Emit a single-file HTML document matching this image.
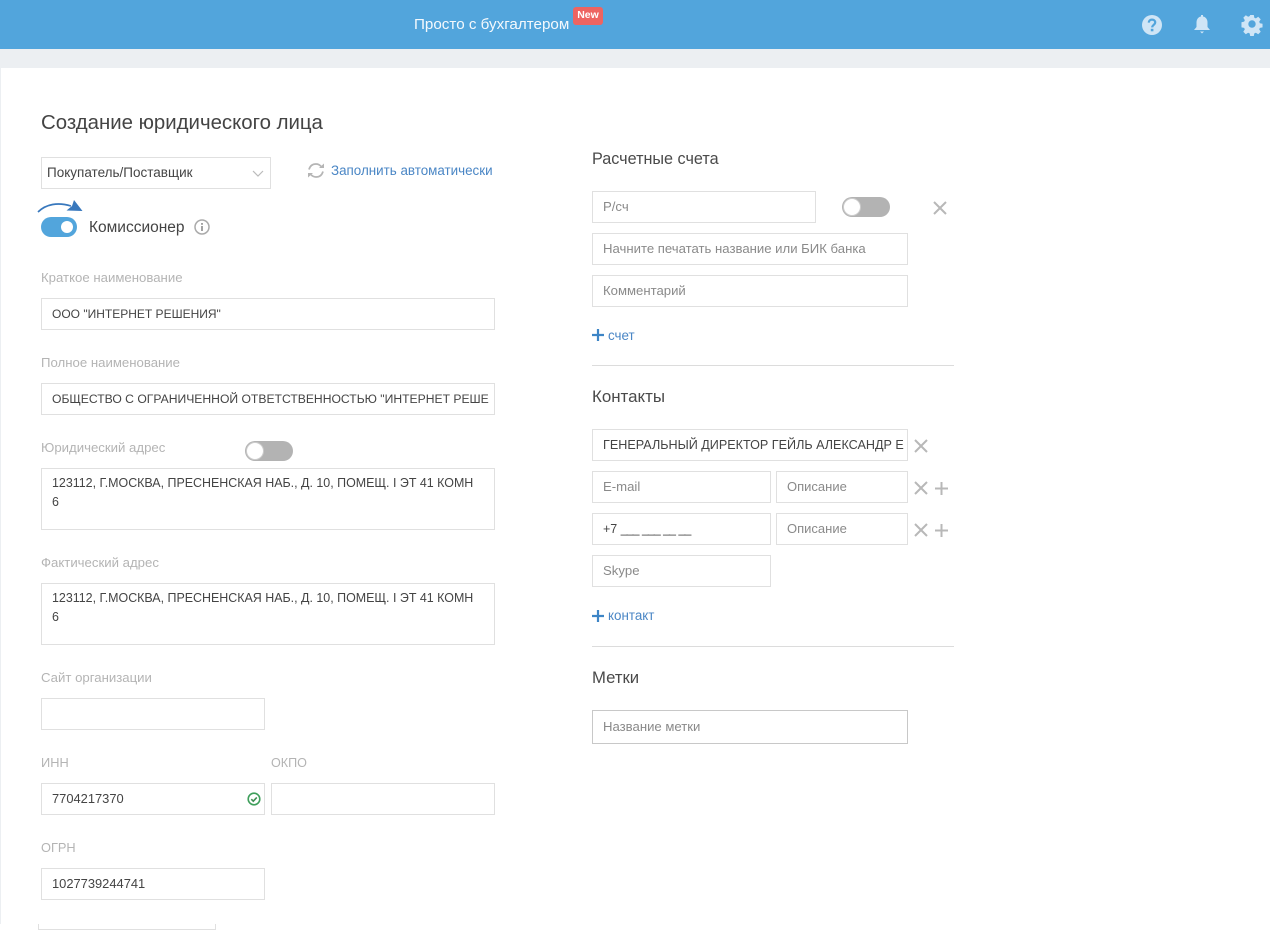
<!DOCTYPE html>
<html lang="ru"><head><meta charset="utf-8"><title>Создание юридического лица</title>
<style>
html,body{margin:0;padding:0;width:1270px;height:933px;overflow:hidden;background:#fff}
body{position:relative;font-family:"Liberation Sans",sans-serif;font-size:13px;color:#444}
.a{position:absolute}
.t{position:absolute;white-space:nowrap;line-height:18px}
.l{color:#b4b4b4;font-size:13.2px}
.h{font-size:16.4px;color:#4a4a4a;line-height:20px}
.b{position:absolute;box-sizing:border-box;border:1px solid #e0e0e0;background:#fff;overflow:hidden;white-space:nowrap}
.i{line-height:30px;padding-left:10px;color:#444;font-size:12.5px}
.p{color:#8a8a8a;font-size:13.15px}
.lk{color:#4a86c5;font-size:13.4px}
.hr{position:absolute;height:1px;background:#dcdcdc;left:592px;width:362px}
.sw{position:absolute;width:48px;height:20px;border-radius:10px;background:#b3b3b3}
.sw:before{content:"";position:absolute;left:1px;top:1px;width:18px;height:18px;border-radius:50%;background:#fff;box-sizing:border-box;border:1px solid #ccc}
.u{letter-spacing:-1.05px}
svg{position:absolute;overflow:visible}
</style></head><body>
<div class="a" style="left:0;top:0;width:1270px;height:49px;background:#52a5dc"></div>
<div class="a" style="left:0;top:49px;width:1270px;height:19px;background:#eceff2"></div>
<div class="a" style="left:0;top:68px;width:1px;height:856px;background:#eceff2"></div>
<div class="t" style="left:414px;top:16px;color:#f4f9fd;font-size:15.2px">Просто с бухгалтером</div>
<div class="t" style="left:573px;top:7px;width:30px;height:18px;border-radius:3px;background:#ee6461;color:#fff;font-size:10.5px;font-weight:bold;text-align:center;line-height:17px">New</div>

<svg style="left:1141px;top:14px" width="22" height="22" viewBox="0 0 22 22"><circle cx="11" cy="11" r="10" fill="#cfe5f6"/><path d="M7.8 8.6C7.8 6.7 9.2 5.6 11 5.6s3.2 1.1 3.2 2.8c0 2.4-3 2.400-3 5" fill="none" stroke="#52a5dc" stroke-width="2.200"/><rect x="9.800" y="14.800" width="2.600" height="2.500" fill="#52a5dc"/></svg>
<svg style="left:1193px;top:14px" width="18" height="20" viewBox="0 0 18 20"><path d="M8 1h2v1.500c3 .6 4.500 3 4.500 6v4.500l2.500 3H1l2.500-3V8.500c0-3 1.500-5.400 4.500-6z" fill="#cfe5f6"/><path d="M7 17.500h4L9 19.500z" fill="#cfe5f6"/></svg>
<svg style="left:1241px;top:13px" width="22" height="22" viewBox="0 0 22 22"><path d="M9 1h4l.6 3 1.700.7 2.600-1.700 2.800 2.800-1.700 2.600.7 1.700 3 .6v4l-3 .6-.7 1.700 1.700 2.600-2.800 2.800-2.600-1.700-1.700.7-.6 3H9l-.6-3-1.700-.7-2.600 1.700-2.800-2.800 1.700-2.600-.7-1.700-3-.6V9l3-.6.7-1.700L1.300 4.100 4.100 1.300l2.600 1.700 1.700-.7z" transform="translate(1.100 1.100) scale(.9)" fill="#cfe5f6"/><circle cx="11" cy="11" r="3.700" fill="#52a5dc"/></svg>

<div class="t" style="left:41px;top:111px;font-size:20.4px;line-height:24px;color:#444">Создание юридического лица</div>

<div class="b i" style="left:41px;top:157px;width:230px;height:32px;padding-left:5px;color:#444;font-size:13.5px">Покупатель/Поставщик</div>
<svg style="left:252px;top:170px" width="12" height="8" viewBox="0 0 12 8"><path d="M1 1l5 5 5-5" fill="none" stroke="#bbb" stroke-width="1.200"/></svg>
<svg style="left:307px;top:162px" width="18" height="17" viewBox="0 0 18 17"><path d="M2 7.500C3 4 5.500 2 9 2c2.200 0 3.800 1 5 2.300M16 9.500C15 13 12.500 15 9 15c-2.200 0-3.800-1-5-2.300" fill="none" stroke="#b5b5b5" stroke-width="1.700"/><path d="M12 6h5V1.500zM6 11H1v4.500z" fill="#b5b5b5"/></svg>
<div class="t lk" style="left:331px;top:162px">Заполнить автоматически</div>

<svg style="left:37px;top:198px" width="46" height="16" viewBox="0 0 46 16"><path d="M1 14C9 6 21 4 34 8" fill="none" stroke="#3878bd" stroke-width="1.700"/><path d="M37 2l8.500 11L29.500 12.500l5.500-4.500z" fill="#3878bd"/></svg>
<div class="a" style="left:41px;top:217px;width:36px;height:20px;border-radius:10px;background:#52a5dc"></div>
<div class="a" style="left:61px;top:221px;width:12px;height:12px;border-radius:50%;background:#fff"></div>
<div class="t" style="left:89px;top:219px;font-size:15.5px;color:#444">Комиссионер</div>
<svg style="left:194px;top:219px" width="16" height="16" viewBox="0 0 16 16"><circle cx="8" cy="8" r="7" fill="none" stroke="#aaa" stroke-width="1.500"/><rect x="7.100" y="7" width="1.800" height="5" fill="#999"/><rect x="7.100" y="4" width="1.800" height="1.800" fill="#999"/></svg>

<div class="t l" style="left:41px;top:269px">Краткое наименование</div>
<div class="b i" style="left:41px;top:298px;width:454px;height:32px;font-size:12px">ООО "ИНТЕРНЕТ РЕШЕНИЯ"</div>
<div class="t l" style="left:41px;top:354px">Полное наименование</div>
<div class="b i" style="left:41px;top:383px;width:454px;height:32px;font-size:12.15px">ОБЩЕСТВО С ОГРАНИЧЕННОЙ ОТВЕТСТВЕННОСТЬЮ "ИНТЕРНЕТ РЕШЕ</div>
<div class="t l" style="left:41px;top:439px">Юридический адрес</div>
<div class="sw" style="left:245px;top:441px"></div>
<div class="b" style="left:41px;top:468px;width:454px;height:62px;padding:5px 10px;line-height:19px;white-space:normal;font-size:12.45px">123112, Г.МОСКВА, ПРЕСНЕНСКАЯ НАБ., Д. 10, ПОМЕЩ. I ЭТ 41 КОМН<br>6</div>
<div class="t l" style="left:41px;top:554px">Фактический адрес</div>
<div class="b" style="left:41px;top:583px;width:454px;height:62px;padding:5px 10px;line-height:19px;white-space:normal;font-size:12.45px">123112, Г.МОСКВА, ПРЕСНЕНСКАЯ НАБ., Д. 10, ПОМЕЩ. I ЭТ 41 КОМН<br>6</div>
<div class="t l" style="left:41px;top:669px">Сайт организации</div>
<div class="b" style="left:41px;top:698px;width:224px;height:32px"></div>
<div class="t l" style="left:41px;top:754px;font-size:12.8px">ИНН</div>
<div class="t l" style="left:271px;top:754px;font-size:12.6px">ОКПО</div>
<div class="b i" style="left:41px;top:783px;width:224px;height:32px;font-size:12.9px">7704217370</div>
<svg style="left:247px;top:792px" width="14" height="14" viewBox="0 0 14 14"><circle cx="7" cy="7" r="5.800" fill="none" stroke="#3f9f5c" stroke-width="1.600"/><path d="M4.300 7.200l2 2 3.500-3.800" fill="none" stroke="#3f8f54" stroke-width="1.600"/></svg>
<div class="b" style="left:271px;top:783px;width:224px;height:32px"></div>
<div class="t l" style="left:41px;top:839px;font-size:12.8px">ОГРН</div>
<div class="b i" style="left:41px;top:868px;width:224px;height:32px;font-size:12.9px">1027739244741</div>
<div class="a" style="left:38px;top:924px;width:178px;height:6px;box-sizing:border-box;border:1px solid #e0e0e0;border-top:0"></div>

<div class="t h" style="left:592px;top:149px;font-size:16.2px">Расчетные счета</div>
<div class="b i p" style="left:592px;top:191px;width:224px;height:32px">Р/сч</div>
<div class="sw" style="left:842px;top:197px"></div>
<svg style="left:933px;top:201px" width="14" height="14" viewBox="0 0 14 14"><path d="M1 1l12 12M13 1L1 13" stroke="#b8b8b8" stroke-width="2" fill="none"/></svg>
<div class="b i p" style="left:592px;top:233px;width:316px;height:32px">Начните печатать название или БИК банка</div>
<div class="b i p" style="left:592px;top:275px;width:316px;height:32px">Комментарий</div>
<svg style="left:592px;top:329px" width="12" height="12" viewBox="0 0 12 12"><path d="M6 0v12M0 6h12" stroke="#3d85c6" stroke-width="2.200"/></svg>
<div class="t lk" style="left:608px;top:327px">счет</div>
<div class="hr" style="top:365px"></div>

<div class="t h" style="left:592px;top:387px;font-size:16.9px">Контакты</div>
<div class="b i" style="left:592px;top:429px;width:316px;height:32px;padding-right:3px;font-size:12.6px">ГЕНЕРАЛЬНЫЙ ДИРЕКТОР ГЕЙЛЬ АЛЕКСАНДР Е</div>
<svg style="left:914px;top:439px" width="14" height="14" viewBox="0 0 14 14"><path d="M1 1l12 12M13 1L1 13" stroke="#b8b8b8" stroke-width="2" fill="none"/></svg>
<div class="b i p" style="left:592px;top:471px;width:179px;height:32px">E-mail</div>
<div class="b i p" style="left:776px;top:471px;width:132px;height:32px;font-size:13px">Описание</div>
<svg style="left:914px;top:481px" width="14" height="14" viewBox="0 0 14 14"><path d="M1 1l12 12M13 1L1 13" stroke="#b8b8b8" stroke-width="2" fill="none"/></svg>
<svg style="left:935px;top:482px" width="13" height="13" viewBox="0 0 13 13"><path d="M6.500 0v13M0 6.500h13" stroke="#b8b8b8" stroke-width="2"/></svg>
<div class="b i" style="left:592px;top:513px;width:179px;height:32px;color:#444">+7 <span class="u">___</span> <span class="u">___</span> <span class="u">__</span> <span class="u">__</span></div>
<div class="b i p" style="left:776px;top:513px;width:132px;height:32px;font-size:13px">Описание</div>
<svg style="left:914px;top:523px" width="14" height="14" viewBox="0 0 14 14"><path d="M1 1l12 12M13 1L1 13" stroke="#b8b8b8" stroke-width="2" fill="none"/></svg>
<svg style="left:935px;top:524px" width="13" height="13" viewBox="0 0 13 13"><path d="M6.500 0v13M0 6.500h13" stroke="#b8b8b8" stroke-width="2"/></svg>
<div class="b i p" style="left:592px;top:555px;width:179px;height:32px">Skype</div>
<svg style="left:592px;top:610px" width="12" height="12" viewBox="0 0 12 12"><path d="M6 0v12M0 6h12" stroke="#3d85c6" stroke-width="2.200"/></svg>
<div class="t lk" style="left:608px;top:607px">контакт</div>
<div class="hr" style="top:646px"></div>

<div class="t h" style="left:592px;top:668px;font-size:16.7px">Метки</div>
<div class="b i p" style="left:592px;top:710px;width:316px;height:34px;line-height:32px;border-color:#c8c8c8">Название метки</div>
</body></html>
